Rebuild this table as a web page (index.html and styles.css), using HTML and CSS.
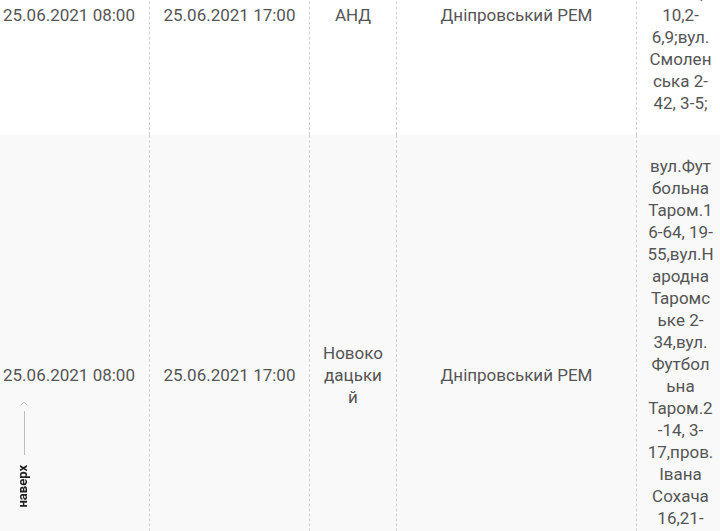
FILE: index.html
```html
<!DOCTYPE html>
<html lang="uk">
<head>
<meta charset="utf-8">
<title>Графік відключень</title>
<link rel="stylesheet" href="styles.css">
</head>
<body>
<div class="viewport">
  <table class="outages">
    <colgroup>
      <col class="c-start">
      <col class="c-end">
      <col class="c-place">
      <col class="c-unit">
      <col class="c-addr">
    </colgroup>
    <tbody>
      <tr class="row">
        <td>25.06.2021 08:00</td>
        <td class="sep">25.06.2021 17:00</td>
        <td class="sep">АНД</td>
        <td class="sep">Дніпровський РЕМ</td>
        <td class="sep addr">вул. Садова 1-7, 2-8, 11-19, 10,2-6,9;вул.Смоленська 2-42, 3-5;</td>
      </tr>
      <tr class="row row-alt">
        <td>25.06.2021 08:00</td>
        <td class="sep">25.06.2021 17:00</td>
        <td class="sep">Новокодацький</td>
        <td class="sep">Дніпровський РЕМ</td>
        <td class="sep addr">вул.Футбольна Таром.16-64, 19-55,вул.Народна Таромське 2-34,вул.Футбольна Таром.2-14, 3-17,пров.Івана Сохача 16,21-35;вул.Гоголя 1-9;</td>
      </tr>
    </tbody>
  </table>
</div>
<a class="to-top" href="#">
  <svg class="to-top-arrow" width="8" height="5" viewBox="0 0 8 5"><polyline points="0.5,4.5 4,1 7.5,4.5" fill="none" stroke="#c8c8c8" stroke-width="1"/></svg>
  <span class="to-top-line"></span>
  <span class="to-top-label">наверх</span>
</a>
</body>
</html>
```

FILE: styles.css
```css
html, body {
  margin: 0;
  padding: 0;
  background: #fff;
}

.viewport {
  height: 100vh;
  overflow: hidden;
}

.outages {
  border-collapse: separate;
  border-spacing: 0;
  table-layout: fixed;
  width: 734px;
  margin: -104px 0 0 -11px;
  font-family: Roboto, "Noto Sans", sans-serif;
  font-size: 17px;
  line-height: 22px;
  color: #555;
}

.c-start, .c-end { width: 160px; }
.c-place { width: 87px; }
.c-unit { width: 240px; }
.c-addr { width: 87px; }

.outages td {
  padding: 20px 10px 21px 10px;
  text-align: center;
  vertical-align: middle;
  overflow-wrap: break-word;
}

.outages td.addr {
  padding-right: 9px;
}

.outages td.sep {
  border-left: 1px dashed #d2d2d2;
}

.row-alt td {
  background: #f9f9f9;
}

.to-top {
  position: fixed;
  left: 17px;
  top: 401px;
  width: 14px;
  display: flex;
  flex-direction: column;
  align-items: center;
  text-decoration: none;
}

.to-top-arrow {
  display: block;
}

.to-top-line {
  display: block;
  width: 1px;
  height: 44px;
  margin-top: 5px;
  background: #bdbdbd;
}

.to-top-label {
  margin-top: 10px;
  margin-right: 4px;
  writing-mode: vertical-rl;
  transform: rotate(180deg);
  font-family: Roboto, "Noto Sans", sans-serif;
  font-weight: 700;
  font-size: 13px;
  line-height: 13px;
  color: #222;
}
```
